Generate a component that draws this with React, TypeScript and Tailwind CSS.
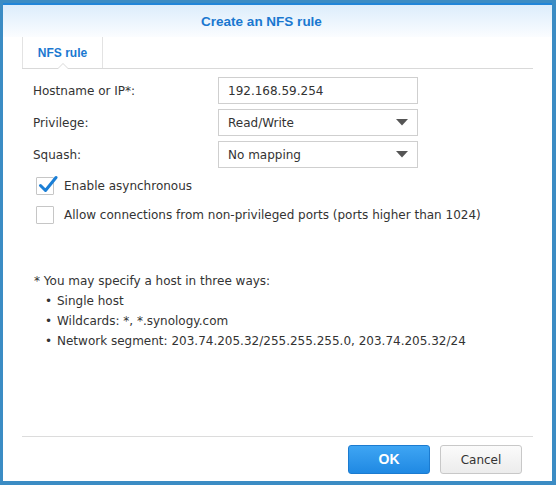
import React from "react";

const font = { fontFamily: '"DejaVu Sans", Verdana, sans-serif' };
const boldFont = { fontFamily: '"Liberation Sans", Arial, sans-serif' };

function Caret() {
  return (
    <svg width="12" height="7" viewBox="0 0 12 7" className="mr-[9px]">
      <path d="M0 0 H12 L6 6.5 Z" fill="#555" />
    </svg>
  );
}

function Field({ children, select }: { children: React.ReactNode; select?: boolean }) {
  return (
    <div className="w-[200px] h-[27px] border border-[#cfcfcf] bg-white flex items-center justify-between pl-[9px] text-[12px] text-[#333]">
      <span>{children}</span>
      {select && <Caret />}
    </div>
  );
}

function Checkbox({ checked }: { checked?: boolean }) {
  return (
    <div className="relative w-[18px] h-[18px] border border-[#c6c6c6] bg-white rounded-[1px]">
      {checked && (
        <svg
          className="absolute left-[1px] top-[-4px]"
          width="20"
          height="20"
          viewBox="0 0 20 20"
        >
          <path
            d="M2.5 11.5 L7.5 16.5 L18 3.5"
            fill="none"
            stroke="#1b7fd6"
            strokeWidth="3"
            strokeLinecap="round"
            strokeLinejoin="round"
          />
        </svg>
      )}
    </div>
  );
}

export default function App() {
  return (
    <div
      className="w-[556px] h-[485px] bg-[#3b8cc4] pl-[3px] pt-[3px] pr-[4px] pb-[4px]"
      style={font}
    >
      <div className="h-full flex flex-col bg-white border-t-[2px] border-[#2185d8]">
        <div className="h-[32px] shrink-0 bg-gradient-to-b from-[#dcedfb] to-[#fbfdff] flex items-center justify-center pr-[32px]">
          <span className="text-[13.5px] font-bold text-[#1a78d0] mt-[2px]" style={boldFont}>
            Create an NFS rule
          </span>
        </div>
        <div className="mx-[19px] border-b border-[#d9d9d9] flex">
          <div className="relative w-[81px] h-[31px] border-l border-r border-[#e3e3e3] flex items-center justify-center">
            <span className="text-[12px] font-bold text-[#1a78d0]" style={boldFont}>
              NFS rule
            </span>
            <div className="absolute left-[34px] bottom-[-1px] w-0 h-0 border-l-[6px] border-r-[6px] border-b-[6px] border-l-transparent border-r-transparent border-b-[#d9d9d9]" />
            <div className="absolute left-[35px] bottom-[-1px] w-0 h-0 border-l-[5px] border-r-[5px] border-b-[5px] border-l-transparent border-r-transparent border-b-white" />
          </div>
        </div>
        <div className="flex-1 pl-[30px] pt-[8px] text-[12px] text-[#333]">
          <div className="flex flex-col gap-[5px]">
            <div className="flex items-center">
              <span className="w-[185px]">Hostname or IP*:</span>
              <Field>192.168.59.254</Field>
            </div>
            <div className="flex items-center">
              <span className="w-[185px]">Privilege:</span>
              <Field select>Read/Write</Field>
            </div>
            <div className="flex items-center">
              <span className="w-[185px]">Squash:</span>
              <Field select>No mapping</Field>
            </div>
          </div>
          <div className="flex flex-col gap-[11px] mt-[9px] pl-[3px]">
            <div className="flex items-center gap-[10px]">
              <Checkbox checked />
              <span>Enable asynchronous</span>
            </div>
            <div className="flex items-center gap-[10px]">
              <Checkbox />
              <span>Allow connections from non-privileged ports (ports higher than 1024)</span>
            </div>
          </div>
          <div className="mt-[47px] pl-[1px] leading-[20px]">
            <div>* You may specify a host in three ways:</div>
            <ul className="pl-[11px]">
              <li className="flex"><span className="w-[12px]">•</span>Single host</li>
              <li className="flex"><span className="w-[12px]">•</span>Wildcards: *, *.synology.com</li>
              <li className="flex"><span className="w-[12px]">•</span>Network segment: 203.74.205.32/255.255.255.0, 203.74.205.32/24</li>
            </ul>
          </div>
        </div>
        <div className="mx-[19px] border-t border-[#dcdcdc] flex justify-end gap-[10px] pt-[8px] pb-[7px] pr-[11px]">
          <button
            className="w-[82px] h-[29px] rounded-[3px] border border-[#1b7bd0] bg-gradient-to-b from-[#3ea5f3] to-[#1f89e3] text-white text-[14px] font-bold"
            style={boldFont}
          >
            OK
          </button>
          <button className="w-[82px] h-[29px] rounded-[3px] border border-[#c8c8c8] bg-gradient-to-b from-[#fbfbfb] to-[#ececec] text-[#333] text-[12px]">
            Cancel
          </button>
        </div>
      </div>
    </div>
  );
}
